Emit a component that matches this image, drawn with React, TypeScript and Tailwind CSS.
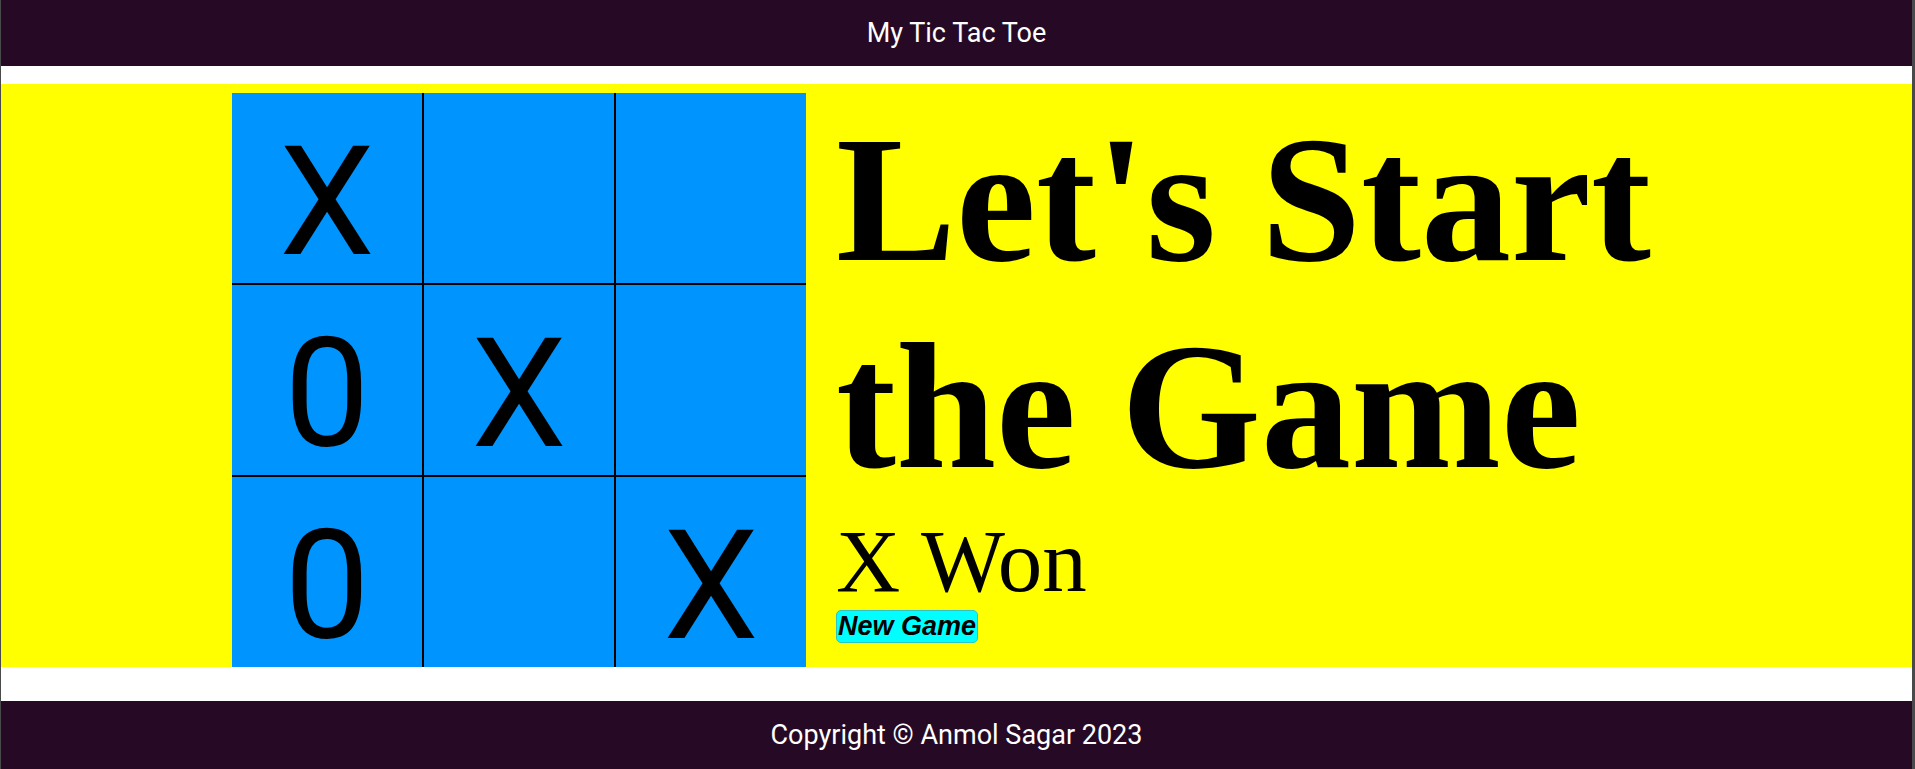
const board = ["X", "", "", "0", "X", "", "0", "", "X"];

export default function App() {
  return (
    <div className="min-h-screen bg-white border-l border-r-[3px] border-[#4a4a4a] font-['Roboto',sans-serif]">
      {/* Header */}
      <header className="h-[66px] bg-[#260a25] flex items-center justify-center text-white text-[27px]">
        My Tic Tac Toe
      </header>

      {/* Game area */}
      <main className="mt-[18px] bg-[#ffff00] flex pl-[231px] gap-[30px]">
        <div className="mt-[9px] grid grid-cols-[192px_192px_190px] grid-rows-[192px_192px_190px] w-[574px]">
          {board.map((v, i) => (
            <div
              key={i}
              className={`bg-[#0094ff] flex justify-center pt-[33px] text-[152px] leading-none text-black ${
                i % 3 < 2 ? "border-r-2 border-black" : ""
              } ${i < 6 ? "border-b-2 border-black" : ""}`}
            >
              {v}
            </div>
          ))}
        </div>

        <div className="pt-[12px] max-w-[1000px] flex flex-col items-start font-['Liberation_Serif',serif] text-black">
          <h1 className="text-[180px] font-bold leading-[1.15]">Let's Start the Game</h1>
          <p className="mt-[7px] text-[89px] leading-none">X Won</p>
          <button className="mt-[4px] h-[33px] px-px rounded-[5px] border border-[#2cc6c6] bg-[#00ffff] font-['Liberation_Sans',sans-serif] text-[27px] font-bold italic leading-none text-black">
            New Game
          </button>
        </div>
      </main>

      {/* Footer */}
      <footer className="mt-[34px] h-[69px] bg-[#260a25] flex items-center justify-center text-white text-[27px]">
        Copyright © Anmol Sagar 2023
      </footer>
    </div>
  );
}
